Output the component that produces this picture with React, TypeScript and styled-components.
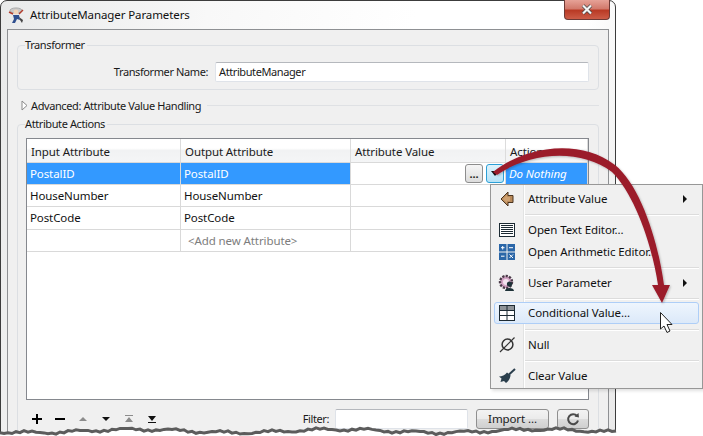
import React from 'react'
import styled, { createGlobalStyle, css } from 'styled-components'

const GlobalStyle = createGlobalStyle`
  html, body {
    margin: 0;
    padding: 0;
    background: #fff;
    font-family: "Noto Sans", "Open Sans", sans-serif;
    font-size: 11.5px;
    letter-spacing: -0.1px;
    color: #1a1a1a;
  }
`

// the dialog's own labels run a little narrower than the table and menu text
const compactText = css`
  font-size: 11px;
  letter-spacing: -0.4px;
`

const Stage = styled.div`
  position: relative;
  width: 703px;
  height: 436px;
  overflow: hidden;
  background: #fff;
`
const Window = styled.div`
  box-sizing: border-box;
  width: 616px;
  height: 460px;
  border: 1px solid #3c3c3c;
  border-radius: 7px 7px 0 0;
  background: linear-gradient(100deg, #e9eaea 0%, #f8f8f8 30%, #fff 60%, #fff 85%, #e8e8e8 100%);
  padding: 0 6px;
  display: flex;
  flex-direction: column;
`
const TitleBar = styled.div`
  height: 28px;
  flex: none;
  display: flex;
  align-items: center;
  gap: 3px;
  position: relative;
`
const TitleText = styled.span`
  color: #111;
  padding-bottom: 2px;
`
const CloseButton = styled.div`
  position: absolute;
  right: -1px;
  top: -1px;
  width: 46px;
  height: 20px;
  box-sizing: border-box;
  border: 1px solid #6d3a36;
  border-top: none;
  border-radius: 0 0 4px 4px;
  background: linear-gradient(#e6a297 0%, #d27a6c 45%, #b93a25 55%, #cc5c47 100%);
  display: flex;
  align-items: center;
  justify-content: center;
`
const Panel = styled.div`
  flex: 1;
  border: 1px solid #8e9093;
  background: #f0f0f0;
  padding: 15px 9px 0;
  display: flex;
  flex-direction: column;
`
const Group = styled.div<{ $grow?: boolean }>`
  position: relative;
  border: 1px solid #dcdfe3;
  border-radius: 4px;
  ${({ $grow }) => ($grow ? 'flex: 1;' : '')}
`
const GroupLabel = styled.span`
  ${compactText}
  position: absolute;
  left: 7px;
  top: -9px;
  background: #f0f0f0;
  padding: 0 2px 0 0;
  line-height: 16px;
`
const NameRow = styled.div`
  height: 43px;
  box-sizing: border-box;
  padding: 16px 9px 0 0;
  display: flex;
  align-items: flex-start;
  justify-content: flex-end;
  gap: 7px;
`
const FieldLabel = styled.label`
  ${compactText}
  line-height: 20px;
`
const TextField = styled.div<{ $width: number }>`
  ${compactText}
  box-sizing: border-box;
  width: ${({ $width }) => $width}px;
  height: 20px;
  border: 1px solid #dfe3e9;
  border-top-color: #b5b8bd;
  border-radius: 2px;
  background: #fff;
  padding-left: 3px;
  line-height: 18px;
`
const Collapsed = styled.div`
  height: 34px;
  display: flex;
  align-items: center;
  gap: 3px;
  padding: 0 0 4px 4px;
  box-sizing: border-box;
`
const CollapsedText = styled.span`
  ${compactText}
`
const CollapsedRule = styled.div`
  flex: 1;
  height: 1px;
  background: #dfe1e4;
  margin-left: 3px;
`
const ActionsBody = styled.div`
  padding: 13px 9px 0 8px;
`
const Table = styled.div`
  box-sizing: border-box;
  height: 262px;
  border: 1px solid #85888e;
  background: #fff;
`
const Row = styled.div<{ $height: number }>`
  display: grid;
  grid-template-columns: 154px 170px 155px 1fr;
  height: ${({ $height }) => $height}px;
  box-sizing: border-box;
  border-bottom: 1px solid #d9d9d9;
`
const HeaderCell = styled.div`
  padding-left: 4px;
  line-height: 25px;
  background: linear-gradient(#fff 0%, #fff 40%, #f1f2f3 50%, #f4f5f6 100%);
  border-right: 1px solid #dcdcdc;
  overflow: hidden;
  white-space: nowrap;
`
const Cell = styled.div<{ $selected?: boolean; $italic?: boolean; $muted?: boolean }>`
  box-sizing: border-box;
  padding-left: ${({ $muted }) => ($muted ? 7 : 3)}px;
  line-height: 22px;
  border-right: 1px solid #d9d9d9;
  background: ${({ $selected }) => ($selected ? '#3399ff' : '#fff')};
  color: ${({ $selected, $muted }) => ($selected ? '#fff' : $muted ? '#7d7d7d' : '#111')};
  font-style: ${({ $italic }) => ($italic ? 'italic' : 'normal')};
  white-space: nowrap;
  overflow: hidden;
`
const ValueCell = styled(Cell)`
  display: flex;
  justify-content: flex-end;
  align-items: center;
  gap: 3px;
  padding-right: 1px;
`
const CellButton = styled.div<{ $active?: boolean }>`
  box-sizing: border-box;
  width: 18px;
  height: 19px;
  border-radius: 3px;
  border: 1px solid ${({ $active }) => ($active ? '#2c9fd6' : '#8d8d8d')};
  background: ${({ $active }) =>
    $active
      ? 'linear-gradient(#dff3fc, #b6e2f6)'
      : 'linear-gradient(#f6f6f6, #dcdcdc)'};
  display: flex;
  align-items: center;
  justify-content: center;
  font-weight: 700;
  font-size: 11px;
  line-height: 14px;
  color: #222;
`
const BottomBar = styled.div`
  height: 29px;
  display: flex;
  align-items: center;
  padding: 8px 0 0 0;
  box-sizing: border-box;
`
const ToolIcons = styled.div`
  display: flex;
  gap: 9px;
  margin-left: 4px;
  flex: 1;
`
const FilterLabel = styled.span`
  ${compactText}
  margin-right: 6px;
`
const PushButton = styled.div<{ $width: number }>`
  box-sizing: border-box;
  width: ${({ $width }) => $width}px;
  height: 20px;
  margin-left: 8px;
  border: 1px solid #8f8f8f;
  border-radius: 3px;
  background: linear-gradient(#f3f3f3 0%, #ebebeb 48%, #dcdcdc 52%, #cfcfcf 100%);
  text-align: center;
  line-height: 17px;
  display: flex;
  align-items: center;
  justify-content: center;
`
const Menu = styled.div`
  position: absolute;
  left: 490px;
  top: 184px;
  width: 213px;
  height: 205px;
  box-sizing: border-box;
  border: 1px solid #979797;
  padding: 3px 0 0;
  background: linear-gradient(
    to right,
    #f0f0f0 32px,
    #e2e3e3 32px,
    #e2e3e3 33px,
    #fff 33px,
    #fff 34px,
    #f0f0f0 34px
  );
  box-shadow: 2px 2px 3px rgba(0, 0, 0, 0.12);
`
const MenuItem = styled.div<{ $hover?: boolean }>`
  box-sizing: border-box;
  height: 22px;
  margin: 0 3px;
  display: flex;
  align-items: center;
  border: 1px solid ${({ $hover }) => ($hover ? '#aeceF7' : 'transparent')};
  border-radius: 3px;
  background: ${({ $hover }) => ($hover ? 'linear-gradient(#eef5fd, #dce9f9)' : 'transparent')};
`
const MenuIcon = styled.span`
  width: 24px;
  height: 20px;
  flex: none;
  display: flex;
  align-items: center;
  justify-content: center;
`
const MenuLabel = styled.span`
  margin-left: 9px;
  padding-bottom: 2px;
  flex: 1;
  color: #111;
`
const SubArrow = styled.span`
  width: 0;
  height: 0;
  border-left: 4px solid #111;
  border-top: 4px solid transparent;
  border-bottom: 4px solid transparent;
  margin-right: 11px;
`
const MenuSeparator = styled.div<{ $height?: number }>`
  height: ${({ $height }) => $height ?? 9}px;
  margin-left: 34px;
  margin-right: 3px;
  display: flex;
  align-items: center;
  &::after {
    content: '';
    flex: 1;
    height: 1px;
    background: #dcdcdc;
    box-shadow: 0 1px 0 #fff;
  }
`
const Overlay = styled.svg`
  position: absolute;
  left: 0;
  top: 0;
  pointer-events: none;
`

// roughly hand-torn bottom edge of the screenshot
const tornPoints = (): string[] => {
  const pts: string[] = []
  for (let x = 0; x <= 616; x += 4) {
    const y =
      431 +
      Math.sin(x * 0.031 + 0.5) * 1.6 +
      Math.sin(x * 0.13 + 1) * 1.2 +
      Math.sin(x * 0.71) * 0.8
    pts.push(`${x} ${y.toFixed(1)}`)
  }
  return pts
}
const tornLine = `M${tornPoints().join(' L')}`
const tornFill = `${tornLine} L616 436 L0 436 Z`

const LogoIcon = () => (
  <svg width="20" height="18" viewBox="0 0 20 18">
    <ellipse cx="9" cy="4.5" rx="6" ry="2.6" fill="#c9c9c9" stroke="#8a8a8a" strokeWidth="0.6" />
    <circle cx="9" cy="6" r="2.4" fill="#f2d3b8" />
    <path d="M2 6 L6 8 M16 4 L12 8" stroke="#b23a2a" strokeWidth="1.4" />
    <path d="M6 9 L12 9 L13 14 L10 13 L8 17 L5 17 L7 13 Z" fill="#2f4f8f" />
    <path d="M12 11 L16 14 L15 17 L13 14 Z" fill="#444" />
  </svg>
)

const PlusIcon = () => (
  <svg width="14" height="12" viewBox="0 0 14 12">
    <path d="M7 1 V11 M2 6 H12" stroke="#000" strokeWidth="2" />
  </svg>
)
const MinusIcon = () => (
  <svg width="14" height="12" viewBox="0 0 14 12">
    <path d="M2 6 H12" stroke="#000" strokeWidth="2" />
  </svg>
)
const TriangleIcon = ({ down, dim }: { down?: boolean; dim?: boolean }) => (
  <svg width="14" height="12" viewBox="0 0 14 12">
    <path d={down ? 'M3 4 H11 L7 8 Z' : 'M3 8 H11 L7 4 Z'} fill={dim ? '#8c8c8c' : '#111'} />
  </svg>
)
const ToEndIcon = ({ down, dim }: { down?: boolean; dim?: boolean }) => (
  <svg width="14" height="12" viewBox="0 0 14 12">
    <path
      d={down ? 'M3 9 H11 V10 H3 Z M3 3 H11 L7 8 Z' : 'M3 2 H11 V3 H3 Z M3 9 H11 L7 4 Z'}
      fill={dim ? '#8c8c8c' : '#111'}
    />
  </svg>
)
const RefreshIcon = () => (
  <svg width="14" height="14" viewBox="0 0 14 14">
    <path d="M11 4 A5 5 0 1 0 12 8.5" fill="none" stroke="#4a4a4a" strokeWidth="2" />
    <path d="M8.5 4.5 L13 5.5 L12.5 1 Z" fill="#4a4a4a" />
  </svg>
)

const AttributeValueIcon = () => (
  <svg width="14" height="16" viewBox="0 0 14 16">
    <path d="M1 8 L8 1 V4.5 H13 V11.5 H8 V15 Z" fill="#b98a5a" stroke="#4a3420" strokeWidth="1" />
    <path d="M3 8 L7 4 V6 H10 V10 H7 V12 Z" fill="#cfa273" />
  </svg>
)
const TextEditorIcon = () => (
  <svg width="16" height="14" viewBox="0 0 16 14">
    <rect x="0.5" y="0.5" width="15" height="13" fill="#fff" stroke="#1c2a33" />
    <path d="M2 2.5 H14 M2 4.5 H14 M2 6.5 H14 M2 8.5 H14 M2 10.5 H14" stroke="#1c2a33" strokeWidth="1" />
  </svg>
)
const ArithmeticIcon = () => (
  <svg width="16" height="16" viewBox="0 0 16 16">
    <rect x="0" y="0" width="7.5" height="7.5" fill="#2a66a8" />
    <rect x="8.5" y="0" width="7.5" height="7.5" fill="#2a66a8" />
    <rect x="0" y="8.5" width="7.5" height="7.5" fill="#2a66a8" />
    <rect x="8.5" y="8.5" width="7.5" height="7.5" fill="#2a66a8" />
    <path
      d="M2 3.7 H5.5 M3.7 2 V5.5 M10 3.7 H14 M2 12.2 H5.5 M10.5 10.5 L14 14 M14 10.5 L10.5 14"
      stroke="#fff"
      strokeWidth="1"
    />
  </svg>
)
const UserParamIcon = () => (
  <svg width="18" height="18" viewBox="0 0 18 18">
    <circle cx="8" cy="8" r="6" fill="#d3a3c4" stroke="#4a3a48" strokeWidth="2.4" strokeDasharray="2.2 1.2" />
    <circle cx="8" cy="8" r="3" fill="#f3e3ef" />
    <circle cx="11.5" cy="10" r="2.6" fill="#1e3238" />
    <path d="M7 17 C7 13 16 13 16 17 Z" fill="#1e3238" />
  </svg>
)
const ConditionalIcon = () => (
  <svg width="16" height="16" viewBox="0 0 16 16">
    <rect x="0.5" y="0.5" width="15" height="15" fill="#fff" stroke="#1c2a33" />
    <rect x="1" y="1" width="14" height="4" fill="#8f9499" />
    <path d="M0 5.5 H16 M0 10.5 H16 M8 0 V16" stroke="#1c2a33" />
  </svg>
)
const NullIcon = () => (
  <svg width="18" height="18" viewBox="0 0 18 18">
    <circle cx="9.5" cy="8.5" r="5.4" fill="none" stroke="#333" strokeWidth="1.5" />
    <path d="M2 16 L16.5 1.5" stroke="#333" strokeWidth="1.2" />
  </svg>
)
const BroomIcon = () => (
  <svg width="18" height="16" viewBox="0 0 18 16">
    <path d="M17 1 L11 6.5" stroke="#2b3f4d" strokeWidth="2" />
    <path d="M12.5 7 L9 4.5 C7 7 4 8.5 1 8.5 L3.5 10.5 L2.5 14 L6 13 L8 15 C10.5 13 12.5 10 12.5 7 Z" fill="#2b3f4d" />
  </svg>
)

const RowCells = ({
  input,
  output,
  selected,
}: {
  input: string
  output: string
  selected?: boolean
}) => (
  <>
    <Cell $selected={selected}>{input}</Cell>
    <Cell $selected={selected}>{output}</Cell>
    {selected ? (
      <ValueCell>
        <CellButton>...</CellButton>
        <CellButton $active>
          <svg width="10" height="6" viewBox="0 0 10 6">
            <path d="M1 0 H9 L5 5 Z" fill="#111" />
          </svg>
        </CellButton>
      </ValueCell>
    ) : (
      <Cell />
    )}
    {selected ? (
      <Cell $selected $italic>
        Do Nothing
      </Cell>
    ) : (
      <Cell />
    )}
  </>
)

const App = (): JSX.Element => (
  <Stage>
    <GlobalStyle />
    <Window>
      <TitleBar>
        <LogoIcon />
        <TitleText>AttributeManager Parameters</TitleText>
        <CloseButton>
          <svg width="14" height="11" viewBox="0 0 14 11">
            <path d="M3 1.5 L11 9.5 M11 1.5 L3 9.5" stroke="#444" strokeWidth="3.6" />
            <path d="M3 1.5 L11 9.5 M11 1.5 L3 9.5" stroke="#f4f4f4" strokeWidth="2.2" />
          </svg>
        </CloseButton>
      </TitleBar>
      <Panel>
        <Group>
          <GroupLabel>Transformer</GroupLabel>
          <NameRow>
            <FieldLabel>Transformer Name:</FieldLabel>
            <TextField $width={374}>AttributeManager</TextField>
          </NameRow>
        </Group>
        <Collapsed>
          <svg width="7" height="11" viewBox="0 0 7 11">
            <path d="M1 1 L6 5.5 L1 10 Z" fill="#fff" stroke="#8a8a8a" />
          </svg>
          <CollapsedText>Advanced: Attribute Value Handling</CollapsedText>
          <CollapsedRule />
        </Collapsed>
        <Group $grow>
          <GroupLabel>Attribute Actions</GroupLabel>
          <ActionsBody>
            <Table>
              <Row $height={24}>
                <HeaderCell>Input Attribute</HeaderCell>
                <HeaderCell>Output Attribute</HeaderCell>
                <HeaderCell>Attribute Value</HeaderCell>
                <HeaderCell>Action</HeaderCell>
              </Row>
              <Row $height={22}>
                <RowCells input="PostalID" output="PostalID" selected />
              </Row>
              <Row $height={22}>
                <RowCells input="HouseNumber" output="HouseNumber" />
              </Row>
              <Row $height={23}>
                <RowCells input="PostCode" output="PostCode" />
              </Row>
              <Row $height={22}>
                <Cell />
                <Cell $muted>&lt;Add new Attribute&gt;</Cell>
                <Cell />
                <Cell />
              </Row>
            </Table>
            <BottomBar>
              <ToolIcons>
                <PlusIcon />
                <MinusIcon />
                <TriangleIcon dim />
                <TriangleIcon down />
                <ToEndIcon dim />
                <ToEndIcon down />
              </ToolIcons>
              <FilterLabel>Filter:</FilterLabel>
              <TextField $width={133} />
              <PushButton $width={73}>Import ...</PushButton>
              <PushButton $width={32}>
                <RefreshIcon />
              </PushButton>
            </BottomBar>
          </ActionsBody>
        </Group>
      </Panel>
    </Window>

    <Menu>
      <MenuItem>
        <MenuIcon>
          <AttributeValueIcon />
        </MenuIcon>
        <MenuLabel>Attribute Value</MenuLabel>
        <SubArrow />
      </MenuItem>
      <MenuSeparator />
      <MenuItem>
        <MenuIcon>
          <TextEditorIcon />
        </MenuIcon>
        <MenuLabel>Open Text Editor...</MenuLabel>
      </MenuItem>
      <MenuItem>
        <MenuIcon>
          <ArithmeticIcon />
        </MenuIcon>
        <MenuLabel>Open Arithmetic Editor...</MenuLabel>
      </MenuItem>
      <MenuSeparator />
      <MenuItem>
        <MenuIcon>
          <UserParamIcon />
        </MenuIcon>
        <MenuLabel>User Parameter</MenuLabel>
        <SubArrow />
      </MenuItem>
      <MenuSeparator $height={8} />
      <MenuItem $hover>
        <MenuIcon>
          <ConditionalIcon />
        </MenuIcon>
        <MenuLabel>Conditional Value...</MenuLabel>
      </MenuItem>
      <MenuSeparator $height={10} />
      <MenuItem>
        <MenuIcon>
          <NullIcon />
        </MenuIcon>
        <MenuLabel>Null</MenuLabel>
      </MenuItem>
      <MenuSeparator />
      <MenuItem>
        <MenuIcon>
          <BroomIcon />
        </MenuIcon>
        <MenuLabel>Clear Value</MenuLabel>
      </MenuItem>
    </Menu>

    <Overlay width="703" height="436" viewBox="0 0 703 436">
      <defs>
        <filter id="soft" x="-10%" y="-10%" width="120%" height="120%">
          <feDropShadow dx="1" dy="1" stdDeviation="1" floodColor="#000" floodOpacity="0.25" />
        </filter>
        <filter id="blur" x="-2%" y="-100%" width="104%" height="300%">
          <feGaussianBlur stdDeviation="0.6" />
        </filter>
      </defs>
      <path
        d="M493 172 C525 146 580 138 615 165 C640 185 658 240 664 285 L670 285 L662 303 L652 285 L658 285 C652 245 635 195 612 172 C580 148 530 152 497 175 Z"
        fill="#9b1b2b"
        filter="url(#soft)"
      />
      <path
        d="M660.5 312.5 V329 L664 326 L667 332.5 L670 331 L667 324.5 L672 324.5 Z"
        fill="#fff"
        stroke="#222"
        strokeWidth="1"
      />
      <path d={tornFill} fill="#fff" />
      <path d={tornLine} fill="none" stroke="#5c5c5c" strokeWidth="3" filter="url(#blur)" />
    </Overlay>
  </Stage>
)

export default App
